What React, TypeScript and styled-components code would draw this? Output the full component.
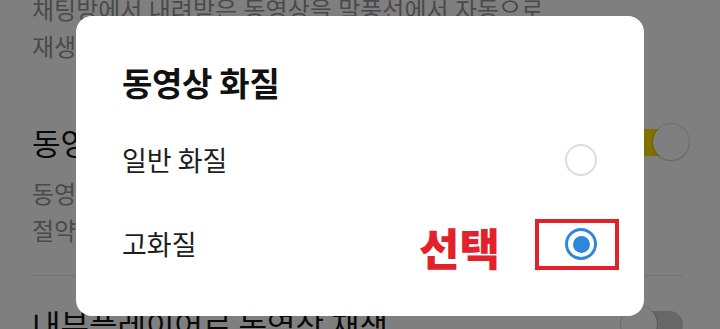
import * as React from "react";
import styled, { createGlobalStyle } from "styled-components";

const GlobalStyle = createGlobalStyle`
  html, body {
    margin: 0;
    padding: 0;
    width: 720px;
    height: 329px;
    overflow: hidden;
    background: #ffffff;
    font-family: "Noto Sans CJK KR", "Noto Sans", sans-serif;
  }
`;

const Screen = styled.div`
  position: relative;
  width: 720px;
  height: 329px;
  overflow: hidden;
  background: #ffffff;
`;

// the settings list is scrolled a little, so the first line is cut at the top
const Page = styled.div`
  display: flex;
  flex-direction: column;
  margin-top: -10px;
  padding: 0 37px 0 32px;
`;

const Section = styled.div<{ $pad: string; $divider?: boolean }>`
  display: flex;
  flex-direction: column;
  padding: ${(p) => p.$pad};
  border-top: ${(p) => (p.$divider ? "1px solid #e6e6e6" : "none")};
`;

const SettingHead = styled.div`
  display: flex;
  align-items: center;
  justify-content: space-between;
`;

const SettingTitle = styled.div`
  font-size: 31px;
  line-height: 40px;
  color: #141414;
  white-space: nowrap;
`;

const SettingDesc = styled.div<{ $first?: boolean }>`
  font-size: 24px;
  line-height: 37px;
  color: #949494;
  white-space: nowrap;
  word-spacing: 1px;
  margin-top: ${(p) => (p.$first ? "12px" : "0")};
`;

const Toggle = styled.div<{ $on: boolean }>`
  position: relative;
  flex: none;
  width: 56px;
  height: 27px;
  border-radius: 14px;
  background: ${(p) => (p.$on ? "#fee500" : "#cfcfcf")};

  &::after {
    content: "";
    position: absolute;
    top: -5px;
    ${(p) => (p.$on ? "right: -6px;" : "left: -6px;")}
    width: 36px;
    height: 36px;
    border-radius: 50%;
    background: #ffffff;
    box-shadow: 0 0 0 1px rgba(0, 0, 0, 0.12), 0 1px 2px rgba(0, 0, 0, 0.15);
  }
`;

const Overlay = styled.div`
  position: absolute;
  inset: 0;
  background: rgba(0, 0, 0, 0.5);
  display: flex;
  justify-content: center;
  align-items: flex-start;
  padding-top: 16px;
`;

const Dialog = styled.div`
  width: 568px;
  height: 300px;
  box-sizing: border-box;
  background: #ffffff;
  border-radius: 16px;
  padding: 46px 47px 0 46px;
  display: flex;
  flex-direction: column;
`;

const DialogTitle = styled.div`
  font-size: 33px;
  font-weight: 700;
  line-height: 40px;
  color: #111111;
  margin-bottom: 16px;
  letter-spacing: -0.3px;
`;

const Option = styled.div`
  display: flex;
  align-items: center;
  justify-content: space-between;
  height: 84px;
`;

const OptionLabel = styled.div`
  font-size: 27px;
  line-height: 34px;
  color: #1e1e1e;
`;

const Radio = styled.div<{ $checked: boolean }>`
  position: relative;
  width: 32px;
  height: 32px;
  box-sizing: border-box;
  border-radius: 50%;
  border: ${(p) => (p.$checked ? "3px solid #2f87dc" : "2.5px solid #dcdcdc")};
  display: flex;
  align-items: center;
  justify-content: center;

  &::before {
    content: "";
    display: ${(p) => (p.$checked ? "block" : "none")};
    width: 17px;
    height: 17px;
    border-radius: 50%;
    background: #2f87dc;
  }
`;

const Highlight = styled.div`
  position: absolute;
  left: -33px;
  right: -25px;
  top: -12px;
  bottom: -13px;
  border: 4px solid #e3212b;
`;

const Callout = styled.div`
  position: absolute;
  right: 94px;
  top: 50%;
  transform: translateY(-44%);
  font-size: 44px;
  font-weight: 900;
  line-height: 1;
  color: #e3212b;
  white-space: nowrap;
  letter-spacing: 0;
`;

export default function App() {
  return (
    <Screen>
      <GlobalStyle />
      <Page>
        <Section $pad="0 0 58px">
          <SettingDesc>채팅방에서 내려받은 동영상을 말풍선에서 자동으로</SettingDesc>
          <SettingDesc>재생합니다.</SettingDesc>
        </Section>
        <Section $pad="0 0 27px">
          <SettingHead>
            <SettingTitle>동영상 데이터 절약 모드</SettingTitle>
            <Toggle $on />
          </SettingHead>
          <SettingDesc $first>
            동영상 전송 시 원본 화질을 유지하지 않고 데이터 사용량을
          </SettingDesc>
          <SettingDesc>절약합니다.</SettingDesc>
        </Section>
        <Section $pad="28px 0 0" $divider>
          <SettingHead>
            <SettingTitle>내부플레이어로 동영상 재생</SettingTitle>
            <Toggle $on={false} />
          </SettingHead>
        </Section>
      </Page>

      <Overlay>
        <Dialog>
          <DialogTitle>동영상 화질</DialogTitle>
          <Option>
            <OptionLabel>일반 화질</OptionLabel>
            <Radio $checked={false} />
          </Option>
          <Option>
            <OptionLabel>고화질</OptionLabel>
            <Radio $checked>
              <Highlight />
              <Callout>선택</Callout>
            </Radio>
          </Option>
        </Dialog>
      </Overlay>
    </Screen>
  );
}
